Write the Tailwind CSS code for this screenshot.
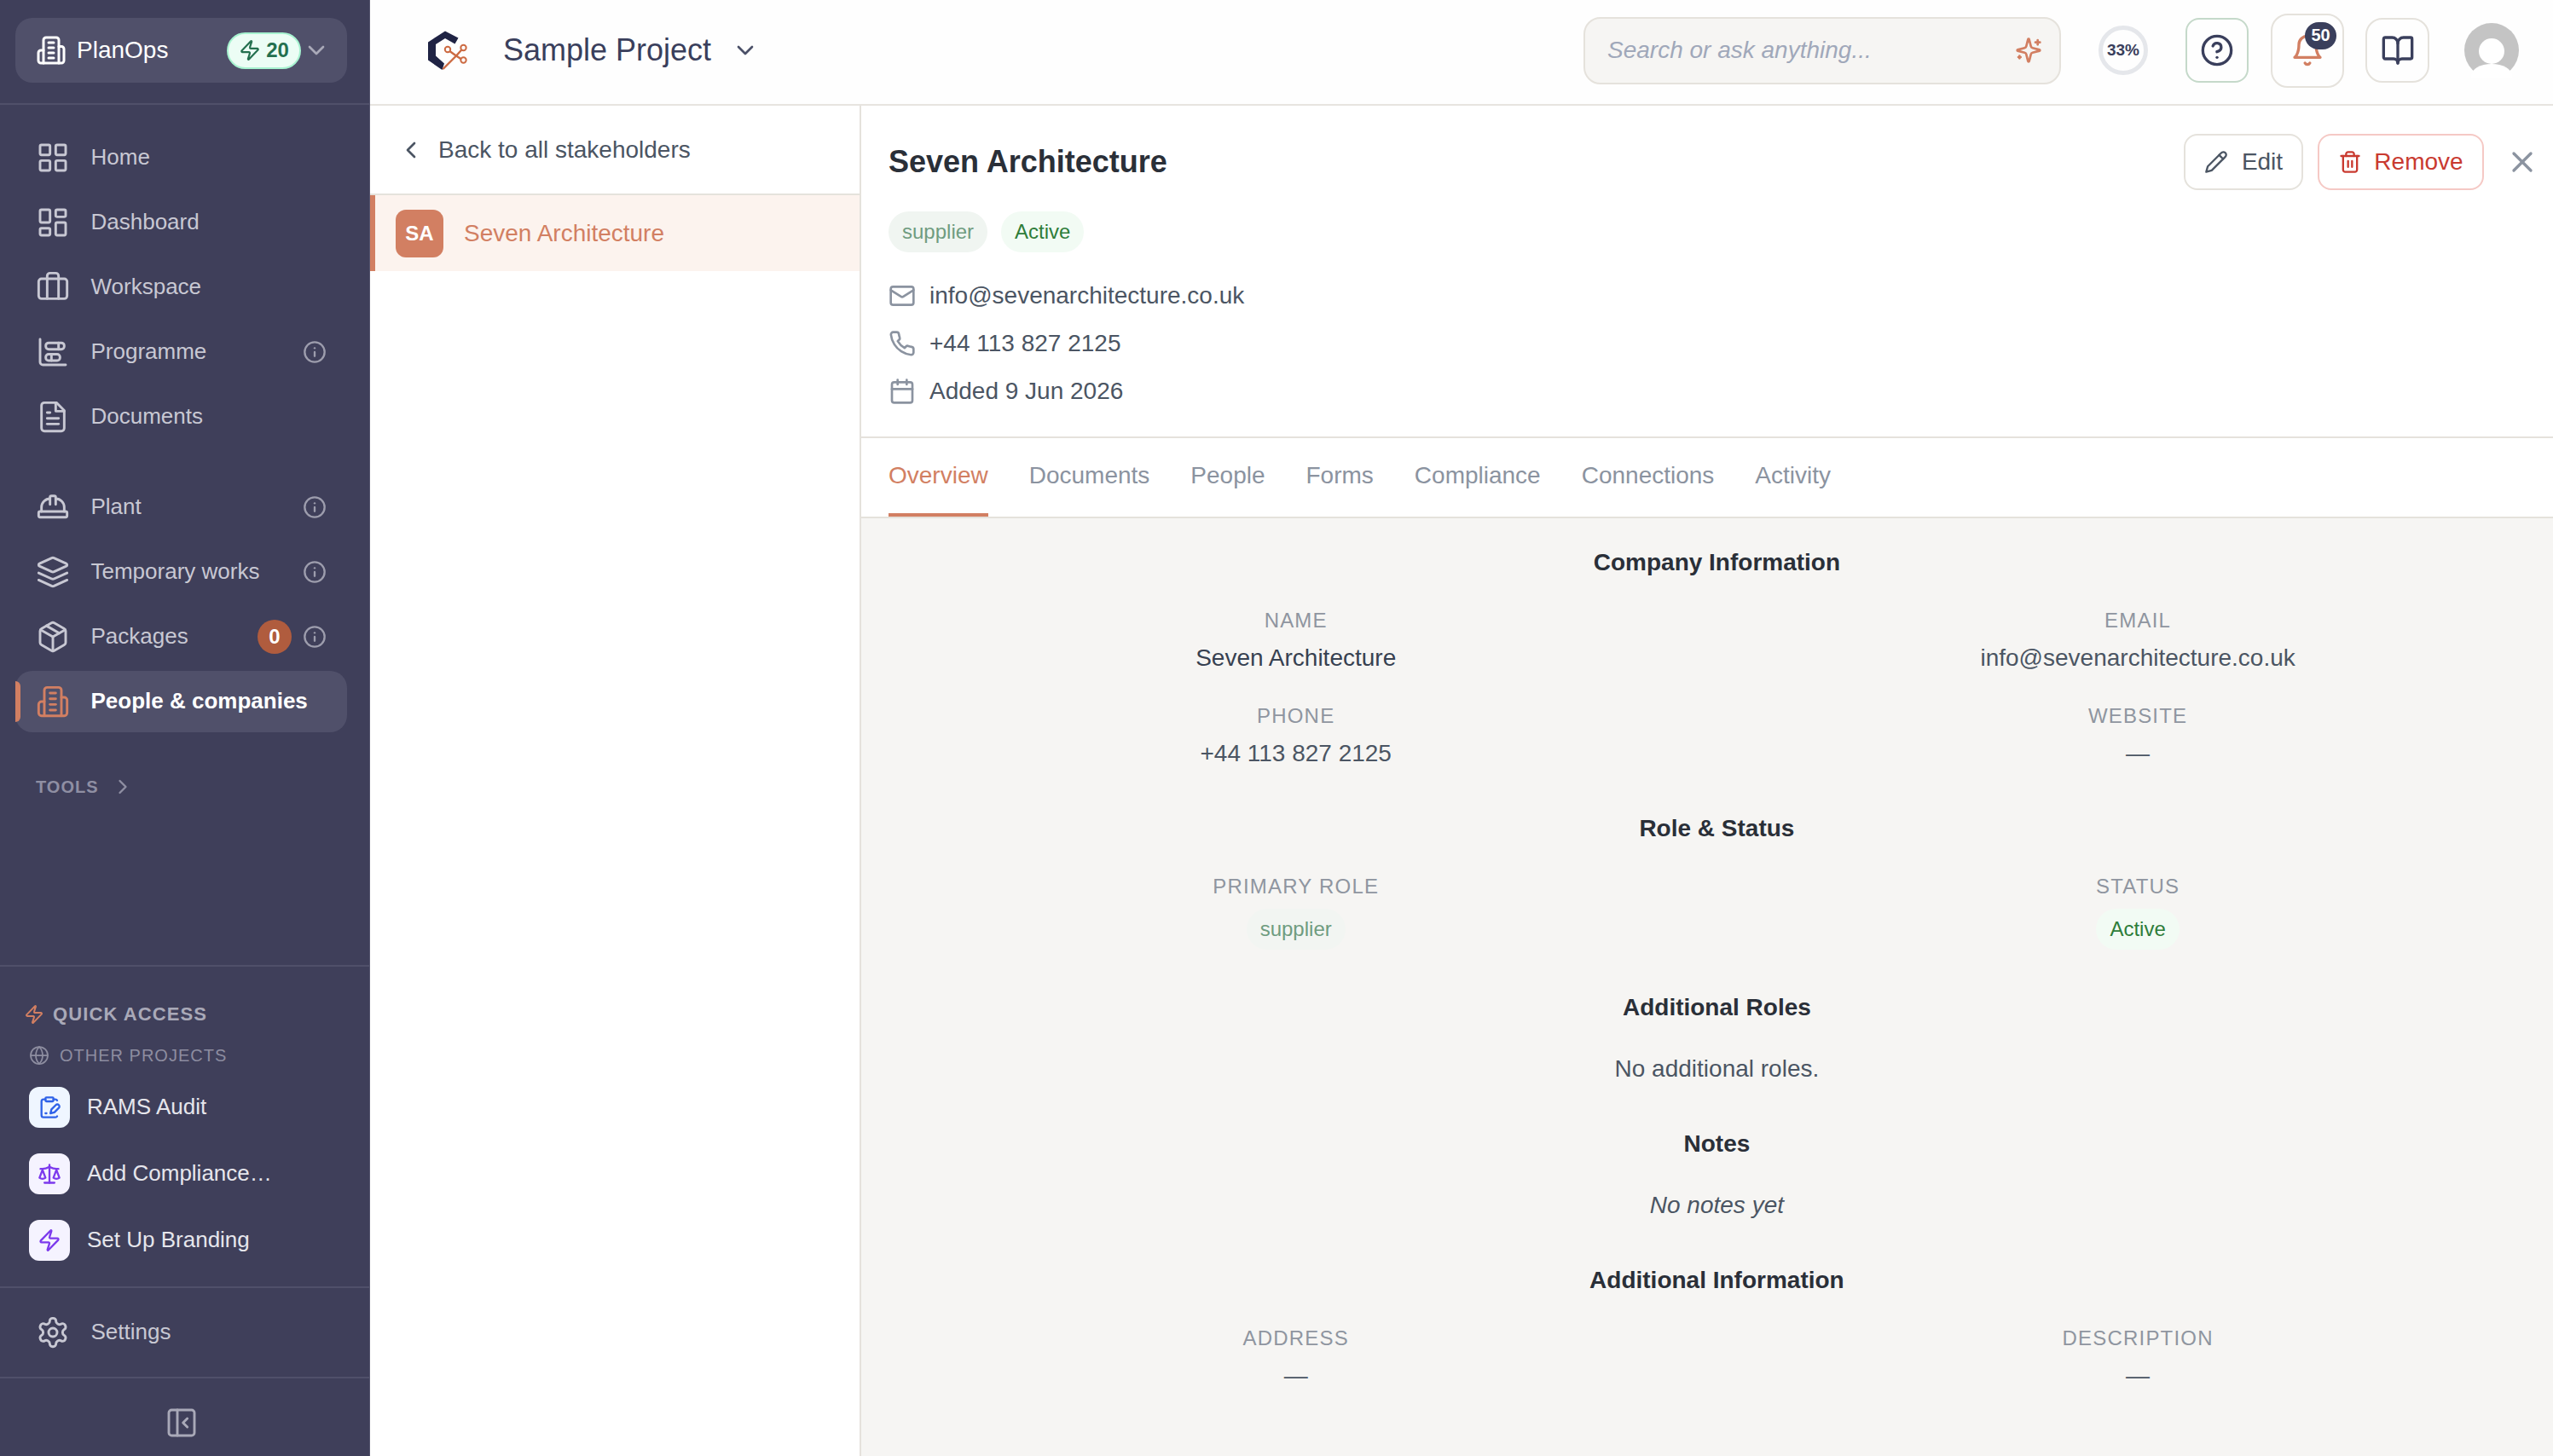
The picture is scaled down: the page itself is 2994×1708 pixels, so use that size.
<!DOCTYPE html>
<html lang="en">
<head>
  <meta charset="UTF-8" />
  <title>Seven Architecture - PlanOps</title>
  <script src="https://cdn.jsdelivr.net/npm/@tailwindcss/browser@4"></script>
</head>
<body class="bg-white">
<div class="[zoom:2] flex h-[854px] w-[1497px] overflow-hidden [font-family:'Liberation_Sans',Arial,sans-serif] text-sm">

  <!-- Sidebar -->
  <aside class="flex h-full w-[217px] shrink-0 flex-col border-r-[0.5px] border-[#55556e] bg-[#3f3f5a] text-[13px] text-[#c8c8d3]">
    <div class="h-[61.5px] shrink-0 border-b border-[#50506a] pl-[9px] pr-[13px] pt-[10.5px]">
      <div class="flex h-[38px] items-center rounded-[10px] bg-[#50506a] pl-[12px] pr-[10px] text-white">
        <svg class="size-[18px] shrink-0" viewBox="0 0 24 24" fill="none" stroke="currentColor" stroke-width="2" stroke-linecap="round" stroke-linejoin="round"><path d="M6 22V4a2 2 0 0 1 2-2h8a2 2 0 0 1 2 2v18Z"/><path d="M6 12H4a2 2 0 0 0-2 2v6a2 2 0 0 0 2 2h2"/><path d="M18 9h2a2 2 0 0 1 2 2v9a2 2 0 0 1-2 2h-2"/><path d="M10 6h4"/><path d="M10 10h4"/><path d="M10 14h4"/><path d="M10 18h4"/></svg>
        <span class="ml-[6px] text-sm">PlanOps</span>
        <span class="ml-auto flex h-[21.5px] w-[43.5px] items-center justify-center gap-[3px] rounded-full border border-[#a7f3d0] bg-[#ecfdf5] text-xs font-bold text-[#24704f]">
          <svg class="size-[13px]" viewBox="0 0 24 24" fill="none" stroke="currentColor" stroke-width="2" stroke-linecap="round" stroke-linejoin="round"><path d="M4 14a1 1 0 0 1-.78-1.63l9.9-10.2a.5.5 0 0 1 .86.46l-1.92 6.02A1 1 0 0 0 13 10h7a1 1 0 0 1 .78 1.63l-9.9 10.2a.5.5 0 0 1-.86-.46l1.92-6.02A1 1 0 0 0 11 14z"/></svg>
          20
        </span>
        <svg class="ml-px size-4 shrink-0 text-[#a9a9b8]" viewBox="0 0 24 24" fill="none" stroke="currentColor" stroke-width="2" stroke-linecap="round" stroke-linejoin="round"><path d="m6 9 6 6 6-6"/></svg>
      </div>
    </div>

    <nav class="flex flex-col gap-0.5 pl-[9px] pr-[13px] pt-[13px]">
      <a class="flex h-9 items-center gap-[12.5px] pl-[11.75px] pr-3">
        <svg class="size-5 shrink-0" viewBox="0 0 24 24" fill="none" stroke="currentColor" stroke-width="1.75" stroke-linecap="round" stroke-linejoin="round"><rect x="3" y="3" width="7" height="7" rx="1"/><rect x="14" y="3" width="7" height="7" rx="1"/><rect x="14" y="14" width="7" height="7" rx="1"/><rect x="3" y="14" width="7" height="7" rx="1"/></svg>
        <span>Home</span>
      </a>
      <a class="flex h-9 items-center gap-[12.5px] pl-[11.75px] pr-3">
        <svg class="size-5 shrink-0" viewBox="0 0 24 24" fill="none" stroke="currentColor" stroke-width="1.75" stroke-linecap="round" stroke-linejoin="round"><rect x="3" y="3" width="7" height="9" rx="1"/><rect x="14" y="3" width="7" height="5" rx="1"/><rect x="14" y="12" width="7" height="9" rx="1"/><rect x="3" y="16" width="7" height="5" rx="1"/></svg>
        <span>Dashboard</span>
      </a>
      <a class="flex h-9 items-center gap-[12.5px] pl-[11.75px] pr-3">
        <svg class="size-5 shrink-0" viewBox="0 0 24 24" fill="none" stroke="currentColor" stroke-width="1.75" stroke-linecap="round" stroke-linejoin="round"><rect x="2" y="6" width="20" height="14" rx="2"/><path d="M16 20V4a2 2 0 0 0-2-2h-4a2 2 0 0 0-2 2v16"/></svg>
        <span>Workspace</span>
      </a>
      <a class="flex h-9 items-center gap-[12.5px] pl-[11.75px] pr-3">
        <svg class="size-5 shrink-0" viewBox="0 0 24 24" fill="none" stroke="currentColor" stroke-width="1.75" stroke-linecap="round" stroke-linejoin="round"><path d="M3 3v16a2 2 0 0 0 2 2h16"/><rect x="7" y="5.5" width="13" height="4.5" rx="2"/><rect x="7" y="13.5" width="10" height="4.5" rx="2"/><path d="M16 5.5V10"/><path d="M11 13.5V18"/></svg>
        <span>Programme</span>
        <svg class="ml-auto size-[14px] shrink-0 text-[#9d9dad]" viewBox="0 0 24 24" fill="none" stroke="currentColor" stroke-width="2" stroke-linecap="round" stroke-linejoin="round"><circle cx="12" cy="12" r="10"/><path d="M12 16v-4"/><path d="M12 8h.01"/></svg>
      </a>
      <a class="flex h-9 items-center gap-[12.5px] pl-[11.75px] pr-3">
        <svg class="size-5 shrink-0" viewBox="0 0 24 24" fill="none" stroke="currentColor" stroke-width="1.75" stroke-linecap="round" stroke-linejoin="round"><path d="M14.5 2H6a2 2 0 0 0-2 2v16a2 2 0 0 0 2 2h12a2 2 0 0 0 2-2V7.5L14.5 2z"/><path d="M14 2v6h6"/><path d="M16 13H8"/><path d="M16 17H8"/><path d="M10 9H8"/></svg>
        <span>Documents</span>
      </a>

      <a class="mt-[15px] flex h-9 items-center gap-[12.5px] pl-[11.75px] pr-3">
        <svg class="size-5 shrink-0" viewBox="0 0 24 24" fill="none" stroke="currentColor" stroke-width="1.75" stroke-linecap="round" stroke-linejoin="round"><path d="M10 10V5a1 1 0 0 1 1-1h2a1 1 0 0 1 1 1v5"/><path d="M14 6a6 6 0 0 1 6 6v3"/><path d="M4 15v-3a6 6 0 0 1 6-6"/><rect x="2" y="15" width="20" height="4" rx="1"/></svg>
        <span>Plant</span>
        <svg class="ml-auto size-[14px] shrink-0 text-[#9d9dad]" viewBox="0 0 24 24" fill="none" stroke="currentColor" stroke-width="2" stroke-linecap="round" stroke-linejoin="round"><circle cx="12" cy="12" r="10"/><path d="M12 16v-4"/><path d="M12 8h.01"/></svg>
      </a>
      <a class="flex h-9 items-center gap-[12.5px] pl-[11.75px] pr-3">
        <svg class="size-5 shrink-0" viewBox="0 0 24 24" fill="none" stroke="currentColor" stroke-width="1.75" stroke-linecap="round" stroke-linejoin="round"><path d="m12.83 2.18a2 2 0 0 0-1.66 0L2.6 6.08a1 1 0 0 0 0 1.83l8.58 3.91a2 2 0 0 0 1.66 0l8.58-3.9a1 1 0 0 0 0-1.83Z"/><path d="m22 17.65-9.17 4.16a2 2 0 0 1-1.66 0L2 17.65"/><path d="m22 12.65-9.17 4.16a2 2 0 0 1-1.66 0L2 12.65"/></svg>
        <span>Temporary works</span>
        <svg class="ml-auto size-[14px] shrink-0 text-[#9d9dad]" viewBox="0 0 24 24" fill="none" stroke="currentColor" stroke-width="2" stroke-linecap="round" stroke-linejoin="round"><circle cx="12" cy="12" r="10"/><path d="M12 16v-4"/><path d="M12 8h.01"/></svg>
      </a>
      <a class="flex h-9 items-center gap-[12.5px] pl-[11.75px] pr-3">
        <svg class="size-5 shrink-0" viewBox="0 0 24 24" fill="none" stroke="currentColor" stroke-width="1.75" stroke-linecap="round" stroke-linejoin="round"><path d="m7.5 4.27 9 5.15"/><path d="M21 8a2 2 0 0 0-1-1.73l-7-4a2 2 0 0 0-2 0l-7 4A2 2 0 0 0 3 8v8a2 2 0 0 0 1 1.73l7 4a2 2 0 0 0 2 0l7-4A2 2 0 0 0 21 16Z"/><path d="m3.3 7 8.7 5 8.7-5"/><path d="M12 22V12"/></svg>
        <span>Packages</span>
        <span class="ml-auto flex size-5 items-center justify-center rounded-full bg-[#b05c3e] text-xs font-bold text-white">0</span>
        <svg class="-ml-1.5 size-[14px] shrink-0 text-[#9d9dad]" viewBox="0 0 24 24" fill="none" stroke="currentColor" stroke-width="2" stroke-linecap="round" stroke-linejoin="round"><circle cx="12" cy="12" r="10"/><path d="M12 16v-4"/><path d="M12 8h.01"/></svg>
      </a>
      <a class="relative flex h-9 items-center gap-[12.5px] rounded-[10px] bg-[#50506a] pl-[11.75px] pr-3 font-bold text-white">
        <span class="absolute left-0 top-1.5 h-6 w-[3px] rounded-r bg-[#d27f62]"></span>
        <svg class="size-5 shrink-0 text-[#d27f62]" viewBox="0 0 24 24" fill="none" stroke="currentColor" stroke-width="1.75" stroke-linecap="round" stroke-linejoin="round"><path d="M6 22V4a2 2 0 0 1 2-2h8a2 2 0 0 1 2 2v18Z"/><path d="M6 12H4a2 2 0 0 0-2 2v6a2 2 0 0 0 2 2h2"/><path d="M18 9h2a2 2 0 0 1 2 2v9a2 2 0 0 1-2 2h-2"/><path d="M10 6h4"/><path d="M10 10h4"/><path d="M10 14h4"/><path d="M10 18h4"/></svg>
        <span>People &amp; companies</span>
      </a>
    </nav>

    <div class="mt-[25px] flex items-center gap-[7px] pl-[21px] text-[10px] font-bold tracking-[0.05em] text-[#8f8fa3]">
      <span>TOOLS</span>
      <svg class="size-3.5" viewBox="0 0 24 24" fill="none" stroke="currentColor" stroke-width="2" stroke-linecap="round" stroke-linejoin="round"><path d="m9 18 6-6-6-6"/></svg>
    </div>

    <div class="flex-1"></div>

    <!-- Quick access -->
    <div class="h-[188.5px] shrink-0 border-t border-[#50506a] pt-5">
      <div class="flex h-4 items-center gap-[5px] pl-[14px] text-[11px] font-bold tracking-[0.05em] text-[#a9a9b8]">
        <svg class="size-3 text-[#d27f62]" viewBox="0 0 24 24" fill="none" stroke="currentColor" stroke-width="2" stroke-linecap="round" stroke-linejoin="round"><path d="M4 14a1 1 0 0 1-.78-1.63l9.9-10.2a.5.5 0 0 1 .86.46l-1.92 6.02A1 1 0 0 0 13 10h7a1 1 0 0 1 .78 1.63l-9.9 10.2a.5.5 0 0 1-.86-.46l1.92-6.02A1 1 0 0 0 11 14z"/></svg>
        QUICK ACCESS
      </div>
      <div class="mt-2.5 flex h-3 items-center gap-1.5 pl-[17px] text-[10px] tracking-[0.05em] text-[#8d8da0]">
        <svg class="size-3" viewBox="0 0 24 24" fill="none" stroke="currentColor" stroke-width="1.75" stroke-linecap="round" stroke-linejoin="round"><circle cx="12" cy="12" r="10"/><path d="M12 2a14.5 14.5 0 0 0 0 20 14.5 14.5 0 0 0 0-20"/><path d="M2 12h20"/></svg>
        OTHER PROJECTS
      </div>
      <div class="mt-[12.5px] flex flex-col gap-[15px] pl-[17px] text-[#e6e6ec]">
        <div class="flex h-6 items-center gap-2.5">
          <span class="flex size-6 items-center justify-center rounded-md bg-[#eff6ff] text-[#2f62e8]">
            <svg class="size-[14px]" viewBox="0 0 24 24" fill="none" stroke="currentColor" stroke-width="2" stroke-linecap="round" stroke-linejoin="round"><rect x="8" y="2" width="8" height="4" rx="1"/><path d="M16 4h2a2 2 0 0 1 1.73 1"/><path d="M8 4H6a2 2 0 0 0-2 2v14a2 2 0 0 0 2 2h12a2 2 0 0 0 1.73-1"/><path d="M18.42 9.61a2.1 2.1 0 1 1 2.97 2.97L16.95 17 13 18l.99-3.95 4.43-4.44Z"/><path d="M8 18h1"/></svg>
          </span>
          <span>RAMS Audit</span>
        </div>
        <div class="flex h-6 items-center gap-2.5">
          <span class="flex size-6 items-center justify-center rounded-md bg-[#f5f3ff] text-[#7c3aed]">
            <svg class="size-[14px]" viewBox="0 0 24 24" fill="none" stroke="currentColor" stroke-width="2" stroke-linecap="round" stroke-linejoin="round"><path d="m16 16 3-8 3 8c-.87.65-1.92 1-3 1s-2.13-.35-3-1Z"/><path d="m2 16 3-8 3 8c-.87.65-1.92 1-3 1s-2.13-.35-3-1Z"/><path d="M7 21h10"/><path d="M12 3v18"/><path d="M3 7h2c2 0 5-1 7-2 2 1 5 2 7 2h2"/></svg>
          </span>
          <span>Add Compliance…</span>
        </div>
        <div class="flex h-6 items-center gap-2.5">
          <span class="flex size-6 items-center justify-center rounded-md bg-[#f5f3ff] text-[#7c3aed]">
            <svg class="size-[14px]" viewBox="0 0 24 24" fill="none" stroke="currentColor" stroke-width="2" stroke-linecap="round" stroke-linejoin="round"><path d="M4 14a1 1 0 0 1-.78-1.63l9.9-10.2a.5.5 0 0 1 .86.46l-1.92 6.02A1 1 0 0 0 13 10h7a1 1 0 0 1 .78 1.63l-9.9 10.2a.5.5 0 0 1-.86-.46l1.92-6.02A1 1 0 0 0 11 14z"/></svg>
          </span>
          <span>Set Up Branding</span>
        </div>
      </div>
    </div>

    <div class="flex h-[53px] shrink-0 items-center gap-[12.5px] border-t border-[#50506a] pl-[20.75px]">
      <svg class="size-5 shrink-0" viewBox="0 0 24 24" fill="none" stroke="currentColor" stroke-width="1.75" stroke-linecap="round" stroke-linejoin="round"><path d="M12.22 2h-.44a2 2 0 0 0-2 2v.18a2 2 0 0 1-1 1.73l-.43.25a2 2 0 0 1-2 0l-.15-.08a2 2 0 0 0-2.73.73l-.22.38a2 2 0 0 0 .73 2.73l.15.1a2 2 0 0 1 1 1.72v.51a2 2 0 0 1-1 1.74l-.15.09a2 2 0 0 0-.73 2.73l.22.38a2 2 0 0 0 2.73.73l.15-.08a2 2 0 0 1 2 0l.43.25a2 2 0 0 1 1 1.73V20a2 2 0 0 0 2 2h.44a2 2 0 0 0 2-2v-.18a2 2 0 0 1 1-1.73l.43-.25a2 2 0 0 1 2 0l.15.08a2 2 0 0 0 2.73-.73l.22-.39a2 2 0 0 0-.73-2.73l-.15-.08a2 2 0 0 1-1-1.74v-.5a2 2 0 0 1 1-1.74l.15-.09a2 2 0 0 0 .73-2.73l-.22-.38a2 2 0 0 0-2.73-.73l-.15.08a2 2 0 0 1-2 0l-.43-.25a2 2 0 0 1-1-1.73V4a2 2 0 0 0-2-2z"/><circle cx="12" cy="12" r="3"/></svg>
      <span>Settings</span>
    </div>

    <div class="flex h-[46.5px] shrink-0 justify-center border-t border-[#50506a] pr-1 pt-4 text-[#a9a9b8]">
      <svg class="size-5" viewBox="0 0 24 24" fill="none" stroke="currentColor" stroke-width="1.75" stroke-linecap="round" stroke-linejoin="round"><rect x="3" y="3" width="18" height="18" rx="2"/><path d="M9 3v18"/><path d="m16 15-3-3 3-3"/></svg>
    </div>
  </aside>

  <!-- Main column -->
  <div class="flex h-full min-w-0 flex-1 flex-col">
    <header class="flex h-[62px] shrink-0 items-center border-b border-[#e7e4df] bg-[#fefefe] pb-0.5 pl-7 pr-5">
      <svg class="h-[32.5px] w-[35px] shrink-0" viewBox="0 0 70 65" fill="none">
        <path d="M32 9.5 47.5 17.5 43.5 24.5 32 18 21 25 21 38.5 31 47.5 28.5 55 12 43.5 12 22.5Z" fill="#1f2344"/>
        <path d="M30 53.5 45 38.5M36 32l9 6.5M53.5 29 45 38.5M45 38.5 52 43" stroke="#cc6a42" stroke-width="2.4" stroke-linecap="round"/>
        <circle cx="35" cy="31" r="3.2" fill="#fff" stroke="#cc6a42" stroke-width="2"/>
        <circle cx="53.5" cy="29" r="3.2" fill="#fff" stroke="#cc6a42" stroke-width="2"/>
        <circle cx="53.5" cy="43.5" r="3.2" fill="#fff" stroke="#cc6a42" stroke-width="2"/>
      </svg>
      <span class="ml-[15px] text-lg text-[#3a3f5c]">Sample Project</span>
      <svg class="ml-3 size-4 text-[#4b5068]" viewBox="0 0 24 24" fill="none" stroke="currentColor" stroke-width="2" stroke-linecap="round" stroke-linejoin="round"><path d="m6 9 6 6 6-6"/></svg>

      <div class="ml-auto flex h-[39.5px] w-[280px] items-center justify-between rounded-[10px] border border-[#e5e2dc] bg-[#f6f5f3] pl-[13px] pr-2.5">
        <span class="italic text-[#a0a8ba]">Search or ask anything...</span>
        <svg class="size-4 text-[#d27f62]" viewBox="0 0 24 24" fill="none" stroke="currentColor" stroke-width="2" stroke-linecap="round" stroke-linejoin="round"><path d="M9.937 15.5A2 2 0 0 0 8.5 14.063l-6.135-1.582a.5.5 0 0 1 0-.962L8.5 9.936A2 2 0 0 0 9.937 8.5l1.582-6.135a.5.5 0 0 1 .963 0L14.063 8.5A2 2 0 0 0 15.5 9.937l6.135 1.581a.5.5 0 0 1 0 .964L15.5 14.063a2 2 0 0 0-1.437 1.437l-1.582 6.135a.5.5 0 0 1-.963 0z"/><path d="M20 3v4"/><path d="M22 5h-4"/><path d="M4 17v2"/><path d="M5 18H3"/></svg>
      </div>
      <div class="ml-[22px] flex size-[29px] items-center justify-center rounded-full border-[2.5px] border-[#e5e7eb] text-[9.5px] font-bold text-[#3a3f5c]">33%</div>
      <button class="ml-[22px] flex h-[38px] w-[37px] items-center justify-center rounded-lg border border-[#c5d9ca] text-[#3a3f5c]">
        <svg class="size-5" viewBox="0 0 24 24" fill="none" stroke="currentColor" stroke-width="2" stroke-linecap="round" stroke-linejoin="round"><circle cx="12" cy="12" r="10"/><path d="M9.09 9a3 3 0 0 1 5.83 1c0 2-3 3-3 3"/><path d="M12 17h.01"/></svg>
      </button>
      <button class="relative ml-[13px] flex h-[43.5px] w-[43px] items-center justify-center rounded-[10px] border border-[#e5e2dc] text-[#d27f62]">
        <svg class="size-5" viewBox="0 0 24 24" fill="none" stroke="currentColor" stroke-width="2" stroke-linecap="round" stroke-linejoin="round"><path d="M6 8a6 6 0 0 1 12 0c0 7 3 9 3 9H3s3-2 3-9"/><path d="M10.3 21a1.94 1.94 0 0 0 3.4 0"/></svg>
        <span class="absolute left-[19px] top-1 flex h-4 w-[18.5px] items-center justify-center rounded-full bg-[#3a3f5c] text-[10px] font-bold text-white">50</span>
      </button>
      <button class="ml-[12.5px] flex h-[38px] w-[37.5px] items-center justify-center rounded-[10px] border border-[#e5e2dc] text-[#3a3f5c]">
        <svg class="size-5" viewBox="0 0 24 24" fill="none" stroke="currentColor" stroke-width="2" stroke-linecap="round" stroke-linejoin="round"><path d="M12 7v14"/><path d="M3 18a1 1 0 0 1-1-1V4a1 1 0 0 1 1-1h5a4 4 0 0 1 4 4 4 4 0 0 1 4-4h5a1 1 0 0 1 1 1v13a1 1 0 0 1-1 1h-6a3 3 0 0 0-3 3 3 3 0 0 0-3-3z"/></svg>
      </button>
      <svg class="ml-[20.5px] size-8" viewBox="0 0 64 64"><circle cx="32" cy="32" r="32" fill="#c4c4c4"/><circle cx="32" cy="33" r="15" fill="#fff"/><ellipse cx="32" cy="62" rx="24" ry="14" fill="#fff"/></svg>
    </header>

    <div class="flex min-h-0 flex-1">
      <!-- Stakeholder list -->
      <section class="w-[288px] shrink-0 border-r border-[#e5e2dc] bg-white">
        <a class="flex h-[52.5px] items-center gap-2 border-b border-[#e5e2dc] pl-4 text-[#4b5563]">
          <svg class="size-4 shrink-0" viewBox="0 0 24 24" fill="none" stroke="currentColor" stroke-width="2" stroke-linecap="round" stroke-linejoin="round"><path d="m15 18-6-6 6-6"/></svg>
          <span>Back to all stakeholders</span>
        </a>
        <div class="flex h-[44.5px] items-center gap-3 border-l-[3px] border-[#d27f62] bg-[#fcf3ee] pl-3 text-[#d27f62]">
          <span class="flex size-7 items-center justify-center rounded-md bg-[#d27f62] text-xs font-bold text-white">SA</span>
          <span>Seven Architecture</span>
        </div>
      </section>

      <!-- Detail -->
      <section class="flex min-w-0 flex-1 flex-col bg-[#f6f5f3]">
        <div class="h-[195px] shrink-0 border-b border-[#e5e2dc] bg-white pl-4 pr-2 pt-[16.5px]">
          <div class="flex h-[33px] items-center">
            <h1 class="text-lg font-bold text-[#2a2f38]">Seven Architecture</h1>
            <button class="ml-auto flex h-[33px] w-[70px] items-center justify-center gap-2 rounded-lg border border-[#e5e2dc] text-[#4b5563]">
              <svg class="size-[14px]" viewBox="0 0 24 24" fill="none" stroke="currentColor" stroke-width="2" stroke-linecap="round" stroke-linejoin="round"><path d="M17 3a2.85 2.83 0 1 1 4 4L7.5 20.5 2 22l1.5-5.5Z"/><path d="m15 5 4 4"/></svg>
              Edit
            </button>
            <button class="ml-[8.5px] flex h-[33px] w-[97.5px] items-center justify-center gap-[7px] rounded-lg border border-[#f5c9c5] text-[#c93a30]">
              <svg class="size-[14px]" viewBox="0 0 24 24" fill="none" stroke="currentColor" stroke-width="2" stroke-linecap="round" stroke-linejoin="round"><path d="M3 6h18"/><path d="M19 6v14c0 1-1 2-2 2H7c-1 0-2-1-2-2V6"/><path d="M8 6V4c0-1 1-2 2-2h4c1 0 2 1 2 2v2"/><path d="M10 11v6"/><path d="M14 11v6"/></svg>
              Remove
            </button>
            <svg class="ml-[12.5px] size-5 text-[#8b93a0]" viewBox="0 0 24 24" fill="none" stroke="currentColor" stroke-width="2" stroke-linecap="round" stroke-linejoin="round"><path d="M18 6 6 18"/><path d="m6 6 12 12"/></svg>
          </div>
          <div class="mt-[12.5px] flex gap-2 text-xs">
            <span class="flex h-6 items-center rounded-full bg-[#f0f5f1] px-2 text-[#6f9c80]">supplier</span>
            <span class="flex h-6 items-center rounded-full bg-[#f2fbf4] px-2 text-[#2e7d3a]">Active</span>
          </div>
          <div class="mt-[15.5px] flex flex-col gap-2 text-[#4b5563]">
            <div class="flex h-5 items-center gap-2">
              <svg class="size-4 text-[#8b93a0]" viewBox="0 0 24 24" fill="none" stroke="currentColor" stroke-width="2" stroke-linecap="round" stroke-linejoin="round"><rect x="2" y="4" width="20" height="16" rx="2"/><path d="m22 7-8.97 5.7a1.94 1.94 0 0 1-2.06 0L2 7"/></svg>
              info@sevenarchitecture.co.uk
            </div>
            <div class="flex h-5 items-center gap-2">
              <svg class="size-4 text-[#8b93a0]" viewBox="0 0 24 24" fill="none" stroke="currentColor" stroke-width="2" stroke-linecap="round" stroke-linejoin="round"><path d="M22 16.92v3a2 2 0 0 1-2.18 2 19.79 19.79 0 0 1-8.63-3.07 19.5 19.5 0 0 1-6-6 19.79 19.79 0 0 1-3.07-8.67A2 2 0 0 1 4.11 2h3a2 2 0 0 1 2 1.72 12.84 12.84 0 0 0 .7 2.81 2 2 0 0 1-.45 2.11L8.09 9.91a16 16 0 0 0 6 6l1.27-1.27a2 2 0 0 1 2.11-.45 12.84 12.84 0 0 0 2.81.7A2 2 0 0 1 22 16.92z"/></svg>
              +44 113 827 2125
            </div>
            <div class="flex h-5 items-center gap-2">
              <svg class="size-4 text-[#8b93a0]" viewBox="0 0 24 24" fill="none" stroke="currentColor" stroke-width="2" stroke-linecap="round" stroke-linejoin="round"><path d="M8 2v4"/><path d="M16 2v4"/><rect x="3" y="4" width="18" height="18" rx="2"/><path d="M3 10h18"/></svg>
              Added 9 Jun 2026
            </div>
          </div>
        </div>

        <div class="flex shrink-0 gap-6 border-b border-[#e5e2dc] bg-white pl-4 text-[#8b93a0]">
          <a class="border-b-2 border-[#d27f62] pb-3 pt-3 text-[#d27f62]">Overview</a>
          <a class="border-b-2 border-transparent pb-3 pt-3">Documents</a>
          <a class="border-b-2 border-transparent pb-3 pt-3">People</a>
          <a class="border-b-2 border-transparent pb-3 pt-3">Forms</a>
          <a class="border-b-2 border-transparent pb-3 pt-3">Compliance</a>
          <a class="border-b-2 border-transparent pb-3 pt-3">Connections</a>
          <a class="border-b-2 border-transparent pb-3 pt-3">Activity</a>
        </div>

        <div class="min-h-0 flex-1 overflow-hidden pl-4 pr-[4.6px] pt-4 text-center text-[#4b5563]">
          <h2 class="font-bold text-[#2a2f38]">Company Information</h2>
          <div class="mt-4 grid grid-cols-2 gap-4">
            <div>
              <div class="text-xs leading-4 tracking-[0.05em] text-[#8f95a0]">NAME</div>
              <div class="mt-1 text-[#374151]">Seven Architecture</div>
            </div>
            <div>
              <div class="text-xs leading-4 tracking-[0.05em] text-[#8f95a0]">EMAIL</div>
              <div class="mt-1">info@sevenarchitecture.co.uk</div>
            </div>
            <div>
              <div class="text-xs leading-4 tracking-[0.05em] text-[#8f95a0]">PHONE</div>
              <div class="mt-1">+44 113 827 2125</div>
            </div>
            <div>
              <div class="text-xs leading-4 tracking-[0.05em] text-[#8f95a0]">WEBSITE</div>
              <div class="mt-1">—</div>
            </div>
          </div>

          <h2 class="mt-6 font-bold text-[#2a2f38]">Role &amp; Status</h2>
          <div class="mt-4 grid grid-cols-2 gap-4">
            <div>
              <div class="text-xs leading-4 tracking-[0.05em] text-[#8f95a0]">PRIMARY ROLE</div>
              <span class="mt-[5px] inline-flex h-6 items-center rounded-full bg-[#f2f5f2] px-2 text-xs text-[#6f9c80]">supplier</span>
            </div>
            <div>
              <div class="text-xs leading-4 tracking-[0.05em] text-[#8f95a0]">STATUS</div>
              <span class="mt-[5px] inline-flex h-6 items-center rounded-full bg-[#f2fbf4] px-2 text-xs text-[#2e7d3a]">Active</span>
            </div>
          </div>

          <h2 class="mt-6 font-bold text-[#2a2f38]">Additional Roles</h2>
          <p class="mt-4">No additional roles.</p>

          <h2 class="mt-6 font-bold text-[#2a2f38]">Notes</h2>
          <p class="mt-4 italic">No notes yet</p>

          <h2 class="mt-6 font-bold text-[#2a2f38]">Additional Information</h2>
          <div class="mt-4 grid grid-cols-2 gap-4">
            <div>
              <div class="text-xs leading-4 tracking-[0.05em] text-[#8f95a0]">ADDRESS</div>
              <div class="mt-1">—</div>
            </div>
            <div>
              <div class="text-xs leading-4 tracking-[0.05em] text-[#8f95a0]">DESCRIPTION</div>
              <div class="mt-1">—</div>
            </div>
          </div>
        </div>
      </section>
    </div>
  </div>
</div>
</body>
</html>
